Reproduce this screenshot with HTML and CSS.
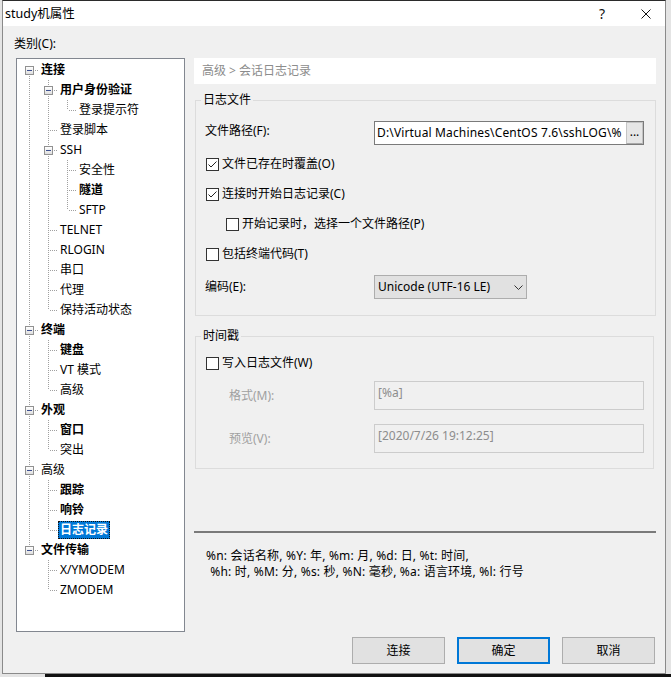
FILE: index.html
```html
<!DOCTYPE html>
<html lang="zh-CN">
<head>
<meta charset="utf-8">
<title>study机属性</title>
<link rel="stylesheet" href="styles.css">
</head>
<body>
<div class="window">
  <div class="titlebar">
    <span class="title">study机属性</span>
    <span class="tb-help">?</span>
    <span class="tb-close"><svg width="10" height="10" viewBox="0 0 10 10"><path d="M0.5 0.5 L9.5 9.5 M9.5 0.5 L0.5 9.5" stroke="#111" stroke-width="1" fill="none"/></svg></span>
  </div>
  <div class="client">
    <div class="cat-label">类别(C):</div>
    <div class="main">
      <div class="tree">
        <div class="row"><span class="cell first"><span class="exp"></span></span><span class="lbl b">连接</span></div>
        <div class="row"><span class="cell v"></span><span class="cell mid"><span class="exp"></span></span><span class="lbl b">用户身份验证</span></div>
        <div class="row"><span class="cell v"></span><span class="cell v"></span><span class="cell last"></span><span class="lbl">登录提示符</span></div>
        <div class="row"><span class="cell v"></span><span class="cell mid"></span><span class="lbl">登录脚本</span></div>
        <div class="row"><span class="cell v"></span><span class="cell mid"><span class="exp"></span></span><span class="lbl">SSH</span></div>
        <div class="row"><span class="cell v"></span><span class="cell v"></span><span class="cell mid"></span><span class="lbl">安全性</span></div>
        <div class="row"><span class="cell v"></span><span class="cell v"></span><span class="cell mid"></span><span class="lbl b">隧道</span></div>
        <div class="row"><span class="cell v"></span><span class="cell v"></span><span class="cell last"></span><span class="lbl">SFTP</span></div>
        <div class="row"><span class="cell v"></span><span class="cell mid"></span><span class="lbl">TELNET</span></div>
        <div class="row"><span class="cell v"></span><span class="cell mid"></span><span class="lbl">RLOGIN</span></div>
        <div class="row"><span class="cell v"></span><span class="cell mid"></span><span class="lbl">串口</span></div>
        <div class="row"><span class="cell v"></span><span class="cell mid"></span><span class="lbl">代理</span></div>
        <div class="row"><span class="cell v"></span><span class="cell last"></span><span class="lbl">保持活动状态</span></div>
        <div class="row"><span class="cell mid"><span class="exp"></span></span><span class="lbl b">终端</span></div>
        <div class="row"><span class="cell v"></span><span class="cell mid"></span><span class="lbl b">键盘</span></div>
        <div class="row"><span class="cell v"></span><span class="cell mid"></span><span class="lbl">VT 模式</span></div>
        <div class="row"><span class="cell v"></span><span class="cell last"></span><span class="lbl">高级</span></div>
        <div class="row"><span class="cell mid"><span class="exp"></span></span><span class="lbl b">外观</span></div>
        <div class="row"><span class="cell v"></span><span class="cell mid"></span><span class="lbl b">窗口</span></div>
        <div class="row"><span class="cell v"></span><span class="cell last"></span><span class="lbl">突出</span></div>
        <div class="row"><span class="cell mid"><span class="exp"></span></span><span class="lbl">高级</span></div>
        <div class="row"><span class="cell v"></span><span class="cell mid"></span><span class="lbl b">跟踪</span></div>
        <div class="row"><span class="cell v"></span><span class="cell mid"></span><span class="lbl b">响铃</span></div>
        <div class="row"><span class="cell v"></span><span class="cell last"></span><span class="lbl b sel">日志记录</span></div>
        <div class="row"><span class="cell last"><span class="exp"></span></span><span class="lbl b">文件传输</span></div>
        <div class="row"><span class="cell"></span><span class="cell mid"></span><span class="lbl">X/YMODEM</span></div>
        <div class="row"><span class="cell"></span><span class="cell last"></span><span class="lbl">ZMODEM</span></div>
      </div>
      <div class="panel">
        <div class="crumb">高级 &gt; 会话日志记录</div>
        <fieldset class="group g1">
          <legend>日志文件</legend>
          <div class="frow path-row">
            <span class="flabel top">文件路径(F):</span>
            <div class="pathbox"><span class="pathtext">D:\Virtual Machines\CentOS 7.6\sshLOG\%</span><span class="browse">...</span></div>
          </div>
          <div class="cb-row r1"><span class="cb"><svg width="11" height="11" viewBox="0 0 11 11"><path d="M1.5 5.5 L4 8 L9.5 2.5" stroke="#222" stroke-width="1" fill="none"/></svg></span>文件已存在时覆盖(O)</div>
          <div class="cb-row r2"><span class="cb"><svg width="11" height="11" viewBox="0 0 11 11"><path d="M1.5 5.5 L4 8 L9.5 2.5" stroke="#222" stroke-width="1" fill="none"/></svg></span>连接时开始日志记录(C)</div>
          <div class="cb-row r3 indent"><span class="cb"></span>开始记录时，选择一个文件路径(P)</div>
          <div class="cb-row r4"><span class="cb"></span>包括终端代码(T)</div>
          <div class="frow enc-row">
            <span class="flabel">编码(E):</span>
            <div class="select"><span>Unicode (UTF-16 LE)</span><svg width="9" height="5" viewBox="0 0 9 5"><path d="M0.5 0.5 L4.5 4.5 L8.5 0.5" stroke="#333" stroke-width="1" fill="none"/></svg></div>
          </div>
        </fieldset>
        <fieldset class="group g2">
          <legend>时间戳</legend>
          <div class="cb-row t1"><span class="cb"></span>写入日志文件(W)</div>
          <div class="frow dis-row fmt">
            <span class="flabel dis">格式(M):</span>
            <div class="disbox">[%a]</div>
          </div>
          <div class="frow dis-row pre">
            <span class="flabel dis">预览(V):</span>
            <div class="disbox">[2020/7/26 19:12:25]</div>
          </div>
        </fieldset>
        <div class="sep"></div>
        <div class="desc">
          <div class="dline">%n: 会话名称, %Y: 年, %m: 月, %d: 日, %t: 时间,</div>
          <div class="dline l2"> %h: 时, %M: 分, %s: 秒, %N: 毫秒, %a: 语言环境, %l: 行号</div>
        </div>
      </div>
    </div>
    <div class="buttons">
      <span class="btn">连接</span>
      <span class="btn default">确定</span>
      <span class="btn">取消</span>
    </div>
  </div>
</div>
<div class="taskstrip"></div>
</body>
</html>
```

FILE: styles.css
```css
html, body {
  margin: 0;
  padding: 0;
}
body {
  width: 671px;
  height: 677px;
  overflow: hidden;
  background: #e4e4e4;
  font-family: "Noto Sans", "Noto Sans CJK SC", sans-serif;
  font-size: 12px;
  line-height: 16px;
  color: #000;
  --dotv: repeating-linear-gradient(to bottom, #a0a0a0 0 1px, transparent 1px 2px);
  --doth: repeating-linear-gradient(to right, #a0a0a0 0 1px, transparent 1px 2px);
}
.window {
  margin-left: 2px;
  width: 662px;
  border: 1px solid #8a8a8a;
  border-top-color: #2b2b2b;
  background: #f0f0f0;
}
.titlebar {
  height: 25px;
  background: #fff;
  display: flex;
  align-items: center;
  padding-left: 2px;
  padding-right: 14px;
}
.title {
  flex: 1;
  font-size: 12.5px;
}
.tb-help {
  width: 12px;
  text-align: center;
  font-size: 14px;
  margin-right: 33px;
  color: #111;
}
.tb-close {
  display: flex;
  width: 10px;
  height: 10px;
}
.client {
  height: 647px;
  box-sizing: border-box;
  padding: 10px 9px 9px 13px;
  display: flex;
  flex-direction: column;
}
.cat-label {
  margin-left: -2px;
}
.main {
  display: flex;
  gap: 9px;
  margin-top: 6px;
  height: 574px;
}
.tree {
  width: 169px;
  flex: none;
  box-sizing: border-box;
  border: 1px solid #828790;
  background: #fff;
  padding: 1px 0 0 3px;
}
.row {
  display: flex;
  height: 20px;
}
.cell {
  width: 19px;
  height: 20px;
  flex: none;
  display: block;
}
.cell.v {
  background: var(--dotv) 9px 0 / 1px 20px no-repeat;
}
.cell.mid {
  background: var(--doth) 11px 10px / 8px 1px no-repeat, var(--dotv) 9px 0 / 1px 20px no-repeat;
}
.cell.last {
  background: var(--doth) 11px 10px / 8px 1px no-repeat, var(--dotv) 9px 0 / 1px 10px no-repeat;
}
.cell.first {
  background: var(--doth) 11px 10px / 8px 1px no-repeat, var(--dotv) 9px 10px / 1px 10px no-repeat;
}
.exp {
  display: block;
  width: 9px;
  height: 9px;
  box-sizing: border-box;
  margin: 6px 0 0 5px;
  border: 1px solid #919191;
  background: linear-gradient(#3c4f8f, #3c4f8f) 1px 3px / 5px 1px no-repeat, linear-gradient(#ffffff, #dedede);
}
.lbl {
  height: 18px;
  line-height: 18px;
  margin-top: 1px;
  padding: 0 2px;
  white-space: nowrap;
}
.lbl.b {
  font-weight: bold;
}
.lbl.sel {
  background: #0078d7;
  color: #fff;
  border: 1px dotted #111;
  padding: 0 1px;
  line-height: 16px;
  height: 16px;
}
.panel {
  flex: 1;
  min-width: 0;
}
.crumb {
  height: 26px;
  box-sizing: border-box;
  background: #fff;
  padding: 5px 0 0 8px;
  color: #8c8c8c;
}
.group {
  margin: 0;
  padding: 0;
  min-width: 0;
  border: 1px solid #dcdcdc;
}
.group legend {
  padding: 0 2px;
  margin-left: 5px;
  line-height: 16px;
}
.g1 {
  margin: 8px 0 0 1px;
  padding-bottom: 16px;
}
.g2 {
  margin: 12px 2px 0 1px;
  padding-bottom: 15px;
}
.frow {
  display: flex;
  align-items: center;
}
.flabel {
  width: 178px;
  flex: none;
  box-sizing: border-box;
  padding-left: 9px;
  line-height: 20px;
}
.flabel.top {
  align-self: flex-start;
}
.flabel.dis {
  padding-left: 33px;
  color: #a0a0a0;
}
.path-row {
  margin-top: 13px;
  height: 24px;
}
.pathbox {
  width: 270px;
  height: 24px;
  box-sizing: border-box;
  border: 1px solid #7a7a7a;
  background: #fff;
  display: flex;
  align-items: stretch;
}
.pathtext {
  flex: 1;
  min-width: 0;
  overflow: hidden;
  white-space: nowrap;
  padding-left: 2px;
  line-height: 22px;
  letter-spacing: 0.15px;
}
.browse {
  width: 17px;
  box-sizing: border-box;
  border: 1px solid #c4c4c4;
  border-bottom-color: #a8a8a8;
  background: #e6e6e6;
  text-align: center;
  line-height: 18px;
  font-size: 12px;
}
.cb-row {
  display: flex;
  align-items: center;
  height: 20px;
  white-space: nowrap;
}
.cb {
  width: 13px;
  height: 13px;
  box-sizing: border-box;
  border: 1px solid #333;
  background: #fff;
  margin: 0 3px 0 10px;
  display: flex;
  align-items: center;
  justify-content: center;
  flex: none;
}
.cb-row.indent .cb {
  margin-left: 30px;
}
.r1 { margin-top: 9px; }
.r2 { margin-top: 10px; }
.r3 { margin-top: 10px; }
.r4 { margin-top: 10px; }
.enc-row {
  margin-top: 11px;
  height: 24px;
}
.select {
  width: 153px;
  height: 24px;
  box-sizing: border-box;
  border: 1px solid #adadad;
  background: #e1e1e1;
  display: flex;
  align-items: center;
  justify-content: space-between;
  padding: 0 3px 0 3px;
}
.t1 { margin-top: 9px; }
.dis-row {
  height: 29px;
}
.fmt { margin-top: 8px; }
.pre { margin-top: 14px; }
.disbox {
  width: 270px;
  height: 29px;
  box-sizing: border-box;
  border: 1px solid #cccccc;
  background: #f0f0f0;
  color: #8d8d8d;
  padding: 3px 3px;
}
.sep {
  height: 2px;
  background: #7a7a7a;
  margin-top: 62px;
}
.desc {
  margin-top: 15px;
  padding-left: 12px;
}
.dline {
  white-space: pre;
  letter-spacing: 0.2px;
}
.l2 {
  padding-left: 1px;
}
.buttons {
  display: flex;
  justify-content: flex-end;
  gap: 12px;
  margin-top: 5px;
  padding-right: 1px;
}
.btn {
  width: 93px;
  height: 27px;
  box-sizing: border-box;
  border: 1px solid #adadad;
  background: #e1e1e1;
  display: flex;
  align-items: center;
  justify-content: center;
}
.btn.default {
  border: 2px solid #0078d7;
}
.taskstrip {
  height: 3px;
  margin-left: 45px;
  background: #111;
}
```
